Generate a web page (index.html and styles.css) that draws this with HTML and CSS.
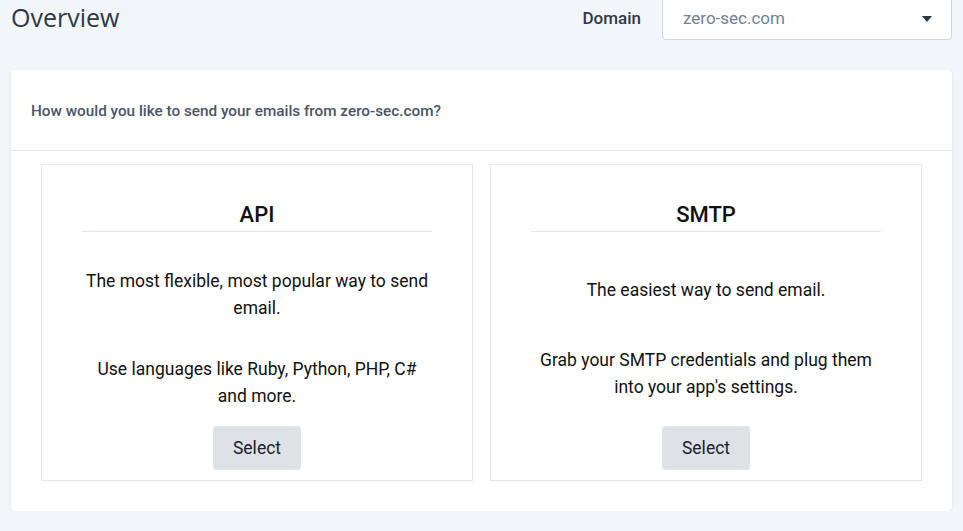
FILE: index.html
```html
<!DOCTYPE html>
<html lang="en">
<head>
<meta charset="utf-8">
<title>Overview</title>
<link rel="stylesheet" href="styles.css">
</head>
<body>
<div class="page">
  <div class="topbar">
    <h1 class="page-title">Overview</h1>
    <div class="domain">
      <span class="domain-label">Domain</span>
      <div class="select">
        <span class="select-value">zero-sec.com</span>
        <svg class="caret" width="10" height="6" viewBox="0 0 10 6"><path d="M0 0H10L5 6Z" fill="#2d3748"/></svg>
      </div>
    </div>
  </div>

  <div class="panel">
    <div class="panel-head">How would you like to send your emails from zero-sec.com?</div>
    <div class="panel-body">
      <div class="option">
        <h2 class="option-title">API</h2>
        <div class="option-desc">
          <p>The most flexible, most popular way to send email.</p>
          <p>Use languages like Ruby, Python, PHP, C# and more.</p>
        </div>
        <div class="option-actions"><button class="btn">Select</button></div>
      </div>
      <div class="option">
        <h2 class="option-title">SMTP</h2>
        <div class="option-desc">
          <p>The easiest way to send email.</p>
          <p>Grab your SMTP credentials and plug them into your app's settings.</p>
        </div>
        <div class="option-actions"><button class="btn">Select</button></div>
      </div>
    </div>
  </div>
</div>
</body>
</html>
```
FILE: styles.css
```css
* { box-sizing: border-box; }
html, body { margin: 0; padding: 0; }
body {
  background: #f3f6f9;
  font-family: Roboto, "Liberation Sans", sans-serif;
  color: #1a1a1a;
  overflow: hidden;
}
.page {
  padding: 0 11px 0 11px;
}
.topbar {
  display: flex;
  align-items: center;
  justify-content: space-between;
  height: 44px;
  margin-top: -4px;
  margin-bottom: 30px;
}
.page-title {
  margin: 0 0 3px 0;
  font-family: "Open Sans", "Noto Sans", sans-serif;
  font-weight: 400;
  font-size: 25px;
  color: #2d3748;
}
.domain {
  display: flex;
  align-items: center;
  gap: 21px;
  height: 100%;
}
.domain-label {
  font-size: 17px;
  font-weight: 500;
  color: #2d3748;
}
.select {
  width: 290px;
  height: 44px;
  border: 1px solid #cfd6de;
  border-radius: 4px;
  background: #fff;
  display: flex;
  align-items: center;
  justify-content: space-between;
  padding: 0 19px 0 20px;
}
.select-value {
  font-size: 17px;
  color: #718096;
}
.caret { display: block; margin-top: 1px; }

.panel {
  background: #fff;
  border-radius: 4px;
  box-shadow: 0 1px 3px rgba(45, 55, 72, 0.14);
}
.panel-head {
  height: 81px;
  display: flex;
  align-items: center;
  padding: 2px 20px 0 20px;
  border-bottom: 1px solid #e2e8f0;
  font-size: 15.3px;
  font-weight: 500;
  color: #4a5568;
}
.panel-body {
  display: grid;
  grid-template-columns: 1fr 1fr;
  gap: 17px;
  padding: 13px 30px 30px 30px;
}
.option {
  border: 1px solid #e2e8f0;
  padding: 38px 40px 10px 40px;
  display: flex;
  flex-direction: column;
  text-align: center;
}
.option-title {
  margin: 0;
  font-size: 22px;
  line-height: 24px;
  font-weight: 500;
  color: #111;
  padding-bottom: 4px;
  border-bottom: 1px solid #e2e8f0;
}
.option-desc {
  height: 212px;
  padding-top: 2px;
  display: flex;
  flex-direction: column;
  justify-content: space-evenly;
}
.option-desc p {
  margin: 0;
  font-size: 17.5px;
  line-height: 27px;
  color: #111;
}
.option-actions {
  margin-top: -18px;
  display: flex;
  justify-content: center;
}
.btn {
  font-family: Roboto, "Liberation Sans", sans-serif;
  font-size: 17.5px;
  color: #1a202c;
  background: #dee2e6;
  border: none;
  border-radius: 4px;
  height: 44px;
  padding: 0;
  width: 88px;
}
```
